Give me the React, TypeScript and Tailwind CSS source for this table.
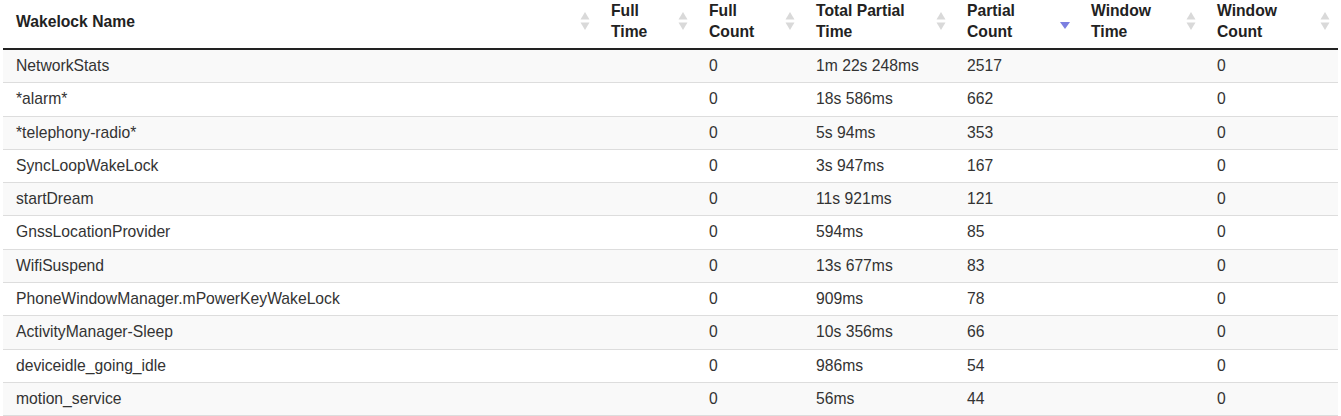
import React from "react";

type Row = {
  name: string;
  fullTime: string;
  fullCount: string;
  partialTime: string;
  partialCount: string;
  windowTime: string;
  windowCount: string;
};

const rows: Row[] = [
  { name: "NetworkStats", fullTime: "", fullCount: "0", partialTime: "1m 22s 248ms", partialCount: "2517", windowTime: "", windowCount: "0" },
  { name: "*alarm*", fullTime: "", fullCount: "0", partialTime: "18s 586ms", partialCount: "662", windowTime: "", windowCount: "0" },
  { name: "*telephony-radio*", fullTime: "", fullCount: "0", partialTime: "5s 94ms", partialCount: "353", windowTime: "", windowCount: "0" },
  { name: "SyncLoopWakeLock", fullTime: "", fullCount: "0", partialTime: "3s 947ms", partialCount: "167", windowTime: "", windowCount: "0" },
  { name: "startDream", fullTime: "", fullCount: "0", partialTime: "11s 921ms", partialCount: "121", windowTime: "", windowCount: "0" },
  { name: "GnssLocationProvider", fullTime: "", fullCount: "0", partialTime: "594ms", partialCount: "85", windowTime: "", windowCount: "0" },
  { name: "WifiSuspend", fullTime: "", fullCount: "0", partialTime: "13s 677ms", partialCount: "83", windowTime: "", windowCount: "0" },
  { name: "PhoneWindowManager.mPowerKeyWakeLock", fullTime: "", fullCount: "0", partialTime: "909ms", partialCount: "78", windowTime: "", windowCount: "0" },
  { name: "ActivityManager-Sleep", fullTime: "", fullCount: "0", partialTime: "10s 356ms", partialCount: "66", windowTime: "", windowCount: "0" },
  { name: "deviceidle_going_idle", fullTime: "", fullCount: "0", partialTime: "986ms", partialCount: "54", windowTime: "", windowCount: "0" },
  { name: "motion_service", fullTime: "", fullCount: "0", partialTime: "56ms", partialCount: "44", windowTime: "", windowCount: "0" },
];

const columns: { label: string[]; key: keyof Row; active?: boolean }[] = [
  { label: ["Wakelock Name"], key: "name" },
  { label: ["Full", "Time"], key: "fullTime" },
  { label: ["Full", "Count"], key: "fullCount" },
  { label: ["Total Partial", "Time"], key: "partialTime" },
  { label: ["Partial", "Count"], key: "partialCount", active: true },
  { label: ["Window", "Time"], key: "windowTime" },
  { label: ["Window", "Count"], key: "windowCount" },
];

function SortIcon({ active }: { active?: boolean }) {
  if (active) {
    return (
      <svg width="12" height="20" viewBox="0 0 12 20" className="shrink-0">
        <polygon points="1,11 11,11 6,18" fill="#7b7fe0" />
      </svg>
    );
  }
  return (
    <svg width="12" height="20" viewBox="0 0 12 20" className="shrink-0">
      <polygon points="6,1 10.5,8.5 1.5,8.5" fill="#d9d9d9" />
      <polygon points="1.5,11.5 10.5,11.5 6,19" fill="#d9d9d9" />
    </svg>
  );
}

export default function App() {
  return (
    <div className="bg-white w-[1341px] h-[416px] overflow-hidden px-[3px]" style={{ fontFamily: '"Liberation Sans", Arial, sans-serif' }}>
      <table className="w-[1335px] table-fixed border-collapse text-[15.7px] text-[#333]">
        <colgroup>
          <col className="w-[595px]" />
          <col className="w-[98px]" />
          <col className="w-[107px]" />
          <col className="w-[151px]" />
          <col className="w-[124px]" />
          <col className="w-[126px]" />
          <col className="w-[134px]" />
        </colgroup>
        <thead>
          <tr className="border-b-2 border-[#222]">
            {columns.map((c) => (
              <th key={c.key} className="pl-[13px] pr-[7px] pt-0 pb-1.5 text-left align-bottom font-bold text-[#222] leading-[21px]">
                <div className="flex items-center justify-between h-[42px]">
                  <div>
                    {c.label.map((l) => (
                      <div key={l}>{l}</div>
                    ))}
                  </div>
                  <SortIcon active={c.active} />
                </div>
              </th>
            ))}
          </tr>
        </thead>
        <tbody>
          {rows.map((r, i) => (
            <tr key={r.name} className={`border-b border-[#ddd] ${i % 2 === 0 ? "bg-[#f9f9f9]" : "bg-white"}`}>
              {columns.map((c) => (
                <td key={c.key} className="pl-[13px] pr-3 py-1.5 leading-[20.3px] whitespace-nowrap">
                  {r[c.key]}
                </td>
              ))}
            </tr>
          ))}
        </tbody>
      </table>
    </div>
  );
}
